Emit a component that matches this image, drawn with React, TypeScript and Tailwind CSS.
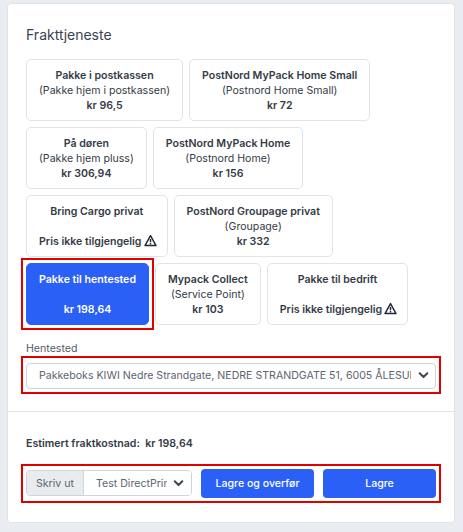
const sans = "font-['Inter','Liberation_Sans',sans-serif]";

const services = [
  { name: "Pakke i postkassen", sub: "(Pakke hjem i postkassen)", price: "kr 96,5" },
  { name: "PostNord MyPack Home Small", sub: "(Postnord Home Small)", price: "kr 72" },
  { name: "På døren", sub: "(Pakke hjem pluss)", price: "kr 306,94" },
  { name: "PostNord MyPack Home", sub: "(Postnord Home)", price: "kr 156" },
  { name: "Bring Cargo privat", sub: "", price: "" },
  { name: "PostNord Groupage privat", sub: "(Groupage)", price: "kr 332" },
  { name: "Pakke til hentested", sub: "", price: "kr 198,64", selected: true },
  { name: "Mypack Collect", sub: "(Service Point)", price: "kr 103" },
  { name: "Pakke til bedrift", sub: "", price: "" },
];

function WarningIcon() {
  return (
    <svg viewBox="0 0 16 16" className="-mr-[2px] ml-[2px] inline-block h-[13px] w-[13px] align-[-2px]" fill="none">
      <path d="M8 2 L14.8 14.2 H1.2 Z" stroke="#1f2937" strokeWidth="1.8" strokeLinejoin="round" />
      <path d="M8 6.2 V10.2 M8 11.2 V12.8" stroke="#1f2937" strokeWidth="1.8" />
    </svg>
  );
}

function Chevron() {
  return (
    <svg viewBox="0 0 16 16" className="pointer-events-none absolute right-[7px] top-1/2 h-[11px] w-[11px] -translate-y-1/2" fill="none">
      <path d="M2.5 5.5 L8 11 L13.5 5.5" stroke="#3f4650" strokeWidth="3" strokeLinecap="round" strokeLinejoin="round" />
    </svg>
  );
}

function ServiceCard({ s }: { s: (typeof services)[number] }) {
  const card = (
    <button
      className={`block h-[62px] rounded-[5px] border px-[12px] py-[8px] text-center text-[10.6px] leading-[15px] ${
        s.selected ? "border-[#2b60f6] bg-[#2b60f6] text-white" : "border-[#dfe4ea] bg-white text-[#343b46]"
      }`}
    >
      <div className="font-semibold whitespace-nowrap">{s.name}</div>
      <div className="h-[15px] whitespace-nowrap">{s.sub}</div>
      <div className="font-semibold whitespace-nowrap">
        {s.price || (
          <>
            Pris ikke tilgjengelig
            <WarningIcon />
          </>
        )}
      </div>
    </button>
  );
  if (s.selected) {
    return <div className="outline-2 outline-offset-[3px] outline-[#e00000]">{card}</div>;
  }
  return card;
}

export default function App() {
  return (
    <div className={`${sans} h-[532px] w-[463px] overflow-hidden bg-[#e9edf2] pl-[7px] pr-[8px] pt-[3px]`}>
      <div className="h-[520px] rounded-[4px] border border-[#dfe3e8] bg-white">
        <div className="px-[18px] pt-[21px]">
          <h2 className="text-[14px] leading-[20px] font-normal text-[#3a4350]">Frakttjeneste</h2>

          <div className="mt-[14px] flex flex-wrap gap-[6px]">
            {services.map((s) => (
              <ServiceCard key={s.name} s={s} />
            ))}
          </div>

          <label className="mt-[16px] block text-[10.6px] leading-[15px] text-[#555c66]">Hentested</label>
          <div className="relative mt-[5px] outline-2 outline-offset-[3px] outline-[#e00000]">
            <select className="h-[26px] w-full appearance-none rounded-[4px] border border-[#ced4da] bg-white pl-[12px] pr-[24px] text-[10.6px] text-[#5c6470]">
              <option>Pakkeboks KIWI Nedre Strandgate, NEDRE STRANDGATE 51, 6005 ÅLESUND</option>
            </select>
            <Chevron />
          </div>
        </div>

        <div className="mt-[22px] border-t border-[#e3e6ea] px-[18px] pt-[24px]">
          <p className="text-[10.6px] leading-[15px] font-semibold text-[#343b46]">
            Estimert fraktkostnad:&nbsp; kr 198,64
          </p>
          <div className="mt-[18px] flex items-center gap-[9px] outline-2 outline-offset-[3px] outline-[#e00000]">
            <div className="flex h-[26px] w-[166px] rounded-[4px] border border-[#ced4da] text-[10.6px]">
              <span className="flex w-[57px] items-center justify-center rounded-l-[3px] border-r border-[#ced4da] bg-[#e9ecef] text-[#5c6470]">
                Skriv ut
              </span>
              <div className="relative min-w-0 flex-1">
                <select className="h-full w-full appearance-none rounded-r-[3px] bg-white pl-[12px] pr-[24px] text-[10.6px] text-[#5c6470]">
                  <option>Test DirectPrint</option>
                </select>
                <Chevron />
              </div>
            </div>
            <button className="h-[29px] flex-1 rounded-[4px] bg-[#2b60f6] text-[10.6px] font-medium text-white">
              Lagre og overfør
            </button>
            <button className="h-[29px] flex-1 rounded-[4px] bg-[#2b60f6] text-[10.6px] font-medium text-white">
              Lagre
            </button>
          </div>
        </div>
      </div>
    </div>
  );
}
